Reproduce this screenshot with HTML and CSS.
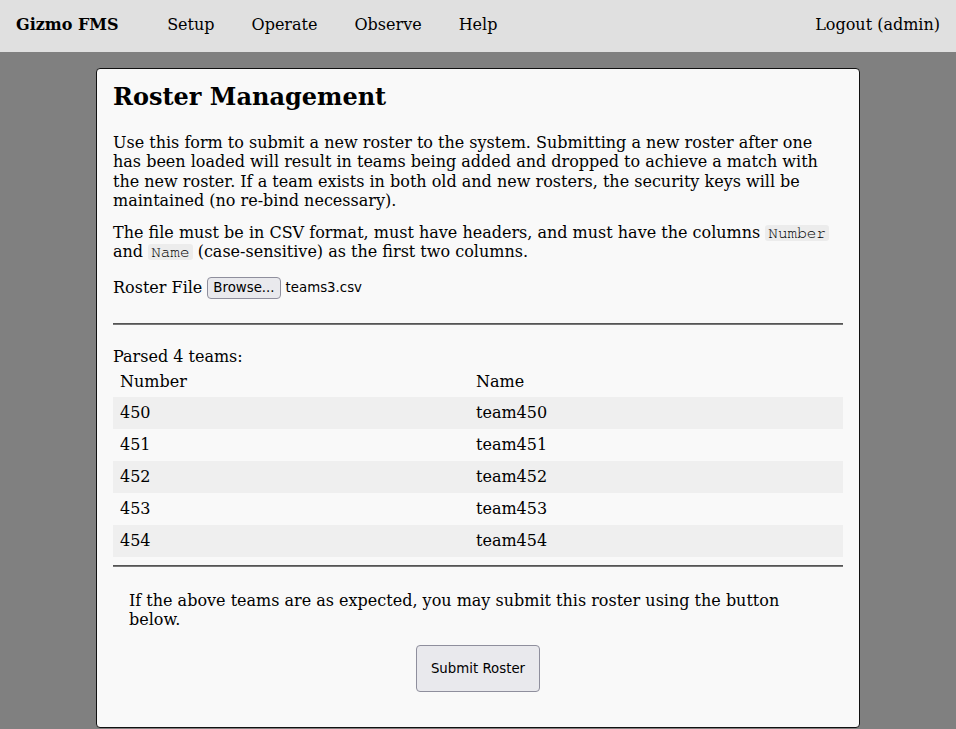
FILE: index.html
```html
<!DOCTYPE html>
<html lang="en">
<head>
<meta charset="utf-8">
<title>Gizmo FMS - Roster Management</title>
<link rel="stylesheet" href="styles.css">
</head>
<body>
<nav class="navbar">
  <a class="brand" href="#">Gizmo FMS</a>
  <a class="nav-link" href="#">Setup</a>
  <a class="nav-link" href="#">Operate</a>
  <a class="nav-link" href="#">Observe</a>
  <a class="nav-link" href="#">Help</a>
  <a class="nav-link logout" href="#">Logout (admin)</a>
</nav>
<main class="card">
  <h1 class="title">Roster Management</h1>
  <p class="text">Use this form to submit a new roster to the system. Submitting a new roster after one has been loaded will result in teams being added and dropped to achieve a match with the new roster. If a team exists in both old and new rosters, the security keys will be maintained (no re-bind necessary).</p>
  <p class="text text-tight">The file must be in CSV format, must have headers, and must have the columns <code class="code">Number</code> and <code class="code">Name</code> (case-sensitive) as the first two columns.</p>
  <div class="file-row">
    <span class="file-label">Roster File</span>
    <button class="browse" type="button">Browse...</button>
    <span class="file-name">teams3.csv</span>
  </div>
  <hr class="rule rule-top">
  <div class="parsed">Parsed 4 teams:</div>
  <table class="teams">
    <thead>
      <tr><th class="col-num">Number</th><th>Name</th></tr>
    </thead>
    <tbody>
      <tr class="stripe"><td>450</td><td>team450</td></tr>
      <tr><td>451</td><td>team451</td></tr>
      <tr class="stripe"><td>452</td><td>team452</td></tr>
      <tr><td>453</td><td>team453</td></tr>
      <tr class="stripe"><td>454</td><td>team454</td></tr>
    </tbody>
  </table>
  <hr class="rule rule-bottom">
  <div class="confirm">
    <p class="text confirm-text">If the above teams are as expected, you may submit this roster using the button below.</p>
    <div class="actions">
      <button class="submit" type="button">Submit Roster</button>
    </div>
  </div>
</main>
</body>
</html>
```
FILE: styles.css
```css
html, body {
  margin: 0;
  padding: 0;
}
body {
  background: #808080;
  font-family: "DejaVu Serif", serif;
  font-size: 16px;
  color: #000;
  height: 729px;
  overflow: hidden;
}
.navbar {
  display: flex;
  align-items: center;
  height: 52px;
  background: #e0e0e0;
  padding: 0 16px 4px;
  box-sizing: border-box;
}
.navbar a {
  color: #000;
  text-decoration: none;
  line-height: 19px;
}
.brand {
  font-weight: bold;
  margin-right: 30px;
}
.nav-link {
  padding: 0 18.5px;
}
.logout {
  margin-left: auto;
  padding: 0;
}
.card {
  display: block;
  width: 764px;
  box-sizing: border-box;
  margin: 16px auto 0;
  background: #f9f9f9;
  border: 1px solid #111;
  border-radius: 4px;
  padding: 14px 16px 35px;
}
.title {
  margin: 0 0 22px;
  font-size: 24px;
  font-weight: bold;
  line-height: 28px;
}
.text {
  margin: 0 0 13px;
  line-height: 19.3px;
}
.text-tight {
  margin-bottom: 15px;
}
.code {
  font-family: "Nimbus Mono PS", "FreeMono", "Courier New", "Liberation Mono", monospace;
  font-size: 16px;
  line-height: 1;
  color: #000;
  background: #ececec;
  padding: 0 3px;
  border-radius: 3px;
}
.file-row {
  display: flex;
  align-items: center;
  height: 22px;
}
.file-label {
  margin-right: 5px;
}
.browse, .submit {
  font-family: "DejaVu Sans", sans-serif;
  font-size: 13.33px;
  color: #000;
  background: #e9e9ed;
  border: 1px solid #8f8f9d;
  border-radius: 4px;
}
.browse {
  height: 22px;
  padding: 0 5px;
  margin-right: 5px;
}
.file-name {
  font-family: "DejaVu Sans", sans-serif;
  font-size: 13.33px;
}
.rule {
  border: 0;
  border-top: 1px solid #555;
  border-bottom: 1px solid #777;
  height: 0;
  margin: 0;
}
.rule-top {
  margin: 24px 0 22px;
}
.rule-bottom {
  margin: 8px 0 24px;
}
.parsed {
  line-height: 19px;
}
.teams {
  width: 100%;
  border-collapse: collapse;
}
.teams th, .teams td {
  text-align: left;
  font-weight: normal;
  padding: 0 7px;
  height: 32px;
  line-height: 19px;
}
.teams th {
  height: 31px;
}
.col-num {
  width: 342px;
}
.stripe td {
  background: #efefef;
}
.confirm {
  padding: 0 16px;
}
.confirm-text {
  margin: 0 0 16px;
}
.actions {
  display: flex;
  justify-content: center;
}
.submit {
  height: 47px;
  padding: 0 14px;
}
```
